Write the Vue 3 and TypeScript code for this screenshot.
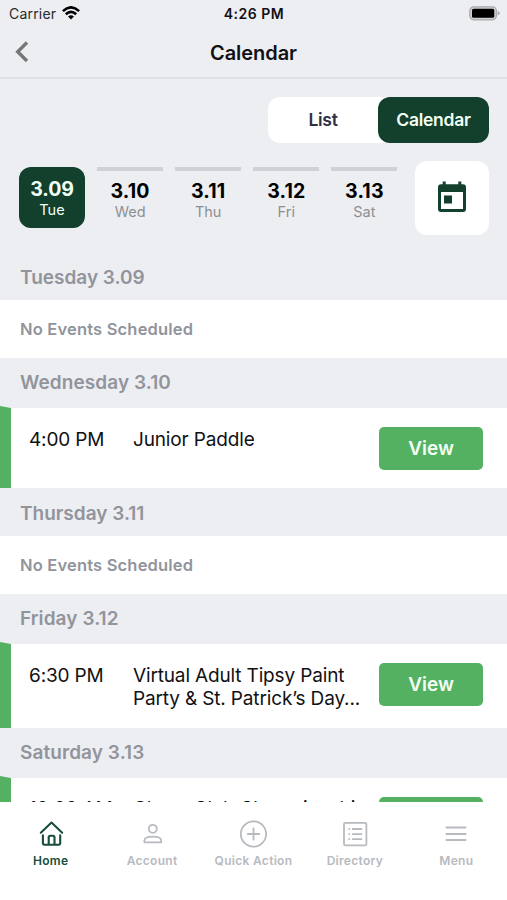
<script setup lang="ts">
interface Day { date: string; name: string; full: string; height: number; rowHeight: number; event?: { time: string; title: string } }

const days: Day[] = [
  { date: '3.09', name: 'Tue', full: 'Tuesday', height: 48, rowHeight: 58 },
  { date: '3.10', name: 'Wed', full: 'Wednesday', height: 50, rowHeight: 80, event: { time: '4:00 PM', title: 'Junior Paddle' } },
  { date: '3.11', name: 'Thu', full: 'Thursday', height: 48, rowHeight: 58 },
  { date: '3.12', name: 'Fri', full: 'Friday', height: 50, rowHeight: 84, event: { time: '6:30 PM', title: 'Virtual Adult Tipsy Paint Party & St. Patrick’s Day...' } },
  { date: '3.13', name: 'Sat', full: 'Saturday', height: 50, rowHeight: 84, event: { time: '10:00 AM', title: 'Chess Club Championship' } },
]
const tabs = ['Home', 'Account', 'Quick Action', 'Directory', 'Menu']
</script>

<template>
  <div class="screen">
    <div class="status">
      <div class="carrier">
        <span>Carrier</span>
        <svg width="18" height="14" viewBox="0 0 18 14" fill="none" stroke="#000" stroke-width="2.6">
          <path d="M.9 5.1Q9-2.4 17.1 5.1" />
          <path d="M3.8 8.2Q9 3.4 14.2 8.2" />
          <path d="M9 13.4 6 10.5Q9 7.8 12 10.5Z" fill="#000" stroke="none" />
        </svg>
      </div>
      <span class="clock">4:26 PM</span>
      <svg class="battery" width="32" height="15" viewBox="0 0 32 15">
        <rect x=".8" y=".8" width="26.6" height="13" rx="4" fill="#d0d1d4" stroke="#a8a9ac" stroke-width="1.2" />
        <rect x="3" y="2.8" width="22.3" height="9" rx="1.6" fill="#000" />
        <path d="M28.700 5v4.600q2-.8 2-2.300T28.700 5Z" fill="#a8a9ac" />
      </svg>
    </div>
    <header class="nav">
      <svg class="back" width="14" height="22" viewBox="0 0 14 22" fill="none" stroke="#77777a" stroke-width="3.4"><path d="M12 1.500 2.700 10.700 12 20" /></svg>
      <h1>Calendar</h1>
    </header>
    <div class="controls">
      <div class="toggle">
        <button class="list">List</button>
        <button class="active">Calendar</button>
      </div>
      <div class="picker">
        <div class="dates">
          <button v-for="(d, i) in days" :key="d.date" class="date" :class="{ chosen: i === 0 }">
            <b>{{ d.date }}</b><span>{{ d.name }}</span>
          </button>
        </div>
        <button class="cal">
          <svg width="28" height="32" viewBox="0 0 28 32" fill="#12402c">
            <path fill-rule="evenodd" d="M4.700.500h3V3.300H20.300V.500h3V3.300H25a3 3 0 0 1 3 3V28a3 3 0 0 1-3 3H3a3 3 0 0 1-3-3V6.300a3 3 0 0 1 3-3H4.700ZM3 11V28H25V11Z" />
            <rect x="6" y="14.500" width="8" height="8" />
          </svg>
        </button>
      </div>
    </div>
    <main class="agenda">
      <section v-for="d in days" :key="d.full">
        <h2 :class="{ busy: d.event }" :style="{ height: d.height + 'px' }"><span>{{ d.full }} {{ d.date }}</span></h2>
        <div class="row" :class="{ event: d.event }" :style="{ height: d.rowHeight + 'px' }">
          <template v-if="d.event">
            <i class="stripe"></i>
            <time>{{ d.event.time }}</time>
            <p>{{ d.event.title }}</p>
            <button class="view">View</button>
          </template>
          <span v-else class="none">No Events Scheduled</span>
        </div>
      </section>
    </main>
    <nav class="tabs">
      <a v-for="(t, i) in tabs" :key="t" :class="['tab', 'tab' + i]">
        <svg width="28" height="28" viewBox="0 0 28 28" fill="none" stroke="currentColor" stroke-width="1.8" stroke-linecap="round" stroke-linejoin="round">
          <template v-if="i === 0">
            <path d="M3.800 12.700 14.500 2.500 25.200 12.700" stroke-width="2" />
            <path d="M5.900 15.300V23q0 1.700 1.700 1.700H11.700V17.400q0-1.700 1.700-1.700h2.400q1.700 0 1.700 1.700V24.700H21.500q1.700 0 1.700-1.700V15.300M11.700 24.700H17.500" stroke-width="2.100" />
          </template>
          <template v-else-if="i === 1">
            <circle cx="14.800" cy="8.800" r="4" />
            <path d="M6.400 22.300V20.500Q6.400 16.600 14.800 16.600T23.200 20.500V22.300Z" />
          </template>
          <template v-else-if="i === 2">
            <circle cx="14.500" cy="14" r="12.700" />
            <path d="M14.500 8.300V19.700M8.800 14H20.200" />
          </template>
          <template v-else-if="i === 3">
            <rect x="3" y="2.900" width="22.400" height="22.400" rx="1.300" />
            <path d="M11.700 9H20.500M11.700 14.100H20.500M11.700 19.200H20.500" />
            <path d="M8.200 9h.1M8.200 14.100h.1M8.200 19.200h.1" />
          </template>
          <path v-else d="M4.500 7.600H23.500M4.500 14H23.500M4.500 20H23.500" stroke-width="2" />
        </svg>
        <span>{{ t }}</span>
      </a>
    </nav>
  </div>
</template>

<style>
body { background: #edeef2; }
</style>
<style scoped>
* { box-sizing: border-box; }
.screen { width: 507px; height: 900px; overflow: hidden; display: flex; flex-direction: column; background: #edeef2; font-family: Inter, "Liberation Sans", sans-serif; color: #111114; }
button { border: 0; padding: 0; margin: 0; font: inherit; background: none; color: inherit; }
h1, h2, p { margin: 0; }
.status { height: 28px; flex: none; display: grid; grid-template-columns: 1fr auto 1fr; align-items: center; padding: 0 6px 2px 9px; font-size: 14px; }
.carrier { display: flex; align-items: center; gap: 6px; letter-spacing: .2px; color: #29292c; }
.carrier svg { margin-top: -1px; }
.clock { font-weight: 600; letter-spacing: .5px; margin-right: 2px; }
.battery { justify-self: end; margin-top: 1px; }
.nav { height: 51px; flex: none; display: grid; grid-template-columns: 60px 1fr 60px; align-items: center; border-bottom: 2px solid #dfe0e3; }
.back { margin-left: 15px; margin-top: -1px; }
h1 { text-align: center; font-size: 20px; font-weight: 600; letter-spacing: -.05px; }
.controls { height: 173px; flex: none; padding: 18px 18px 0 19px; display: flex; flex-direction: column; }
.toggle { align-self: flex-end; display: flex; width: 221px; height: 46px; border-radius: 12px; background: #fff; font-size: 17.500px; font-weight: 600; }
.toggle button { width: 110px; letter-spacing: -.3px; padding-bottom: 2px; }
.toggle .list { color: #2e2f43; }
.toggle .active { width: 111px; background: #12402c; color: #f3fff5; border-radius: 12px; letter-spacing: -.25px; }
.picker { display: flex; justify-content: space-between; align-items: flex-start; margin-top: 18px; }
.dates { display: flex; gap: 12.100px; padding-top: 6px; }
.date { width: 66px; height: 61px; border-top: 4px solid #d0d1d6; display: flex; flex-direction: column; align-items: center; padding-top: 8px; line-height: 24px; }
.date b { font-size: 19.500px; font-weight: 700; letter-spacing: .15px; color: #000; }
.date span { font-size: 14.500px; line-height: 18px; color: #8d8e93; }
.date.chosen { border-top: 0; padding-top: 10px; background: #12402c; border-radius: 12px; }
.date.chosen b, .date.chosen span { color: #f3fff5; }
.date.chosen b { letter-spacing: -.1px; }
.cal { width: 74px; height: 74px; border-radius: 12px; background: #fff; display: grid; place-items: center; padding-bottom: 3px; }
.agenda { height: 550px; flex: none; overflow: hidden; }
h2 { display: flex; align-items: center; padding: 2px 0 0 20px; font-size: 19px; font-weight: 600; color: #92949c; letter-spacing: 0; }
h2.busy { padding: 0 0 2px 20px; letter-spacing: .08px; }
.row { background: #fff; display: flex; }
.none { align-self: center; padding-left: 20px; font-size: 16.500px; font-weight: 600; letter-spacing: .18px; color: #92949c; }
.event { align-items: flex-start; }
.stripe { width: 11px; flex: none; align-self: stretch; margin-top: -2px; background: #55b162; clip-path: polygon(0 0, 100% 2px, 100% 100%, 0 100%); }
time { width: 104px; flex: none; padding-left: 18px; margin-top: 20px; font-size: 19px; line-height: 23px; letter-spacing: -.15px; white-space: nowrap; }
p { margin: 20px 0 0 18px; width: 246px; flex: none; font-size: 19px; line-height: 23px; letter-spacing: -.15px; }
section:last-child time, section:last-child p { margin-top: 19px; }
.view { width: 104px; height: 43px; flex: none; margin-top: 19px; background: #55b162; border-radius: 5px; color: #f3fff5; font-size: 19px; font-weight: 600; }
.tabs { flex: 1; background: #fff; display: grid; grid-template-columns: repeat(5, 1fr); }
.tab { display: flex; flex-direction: column; align-items: center; padding-top: 18px; color: #b7babf; font-size: 12px; font-weight: 600; letter-spacing: .3px; }
.tab span { margin-top: 5px; line-height: 16px; white-space: nowrap; }
.tab0 { color: #174d38; }
</style>
